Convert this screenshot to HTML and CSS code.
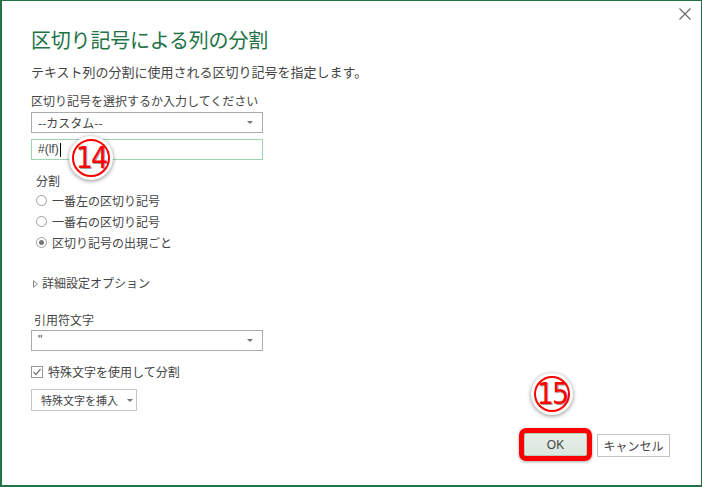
FILE: index.html
```html
<!DOCTYPE html>
<html lang="ja">
<head>
  <meta charset="UTF-8">
  <title>区切り記号による列の分割</title>
  <link rel="stylesheet" href="styles.css">
</head>
<body>

<div class="dialog">
  <svg class="close" width="12" height="12" viewBox="0 0 12 12">
    <path d="M0.5 0.5 L11.5 11.5 M11.5 0.5 L0.5 11.5" stroke="#6a6a6a" stroke-width="1.2" fill="none"/>
  </svg>

  <div class="content">
    <h1 class="title">区切り記号による列の分割</h1>
    <p class="subtitle">テキスト列の分割に使用される区切り記号を指定します。</p>

    <div class="label first">区切り記号を選択するか入力してください</div>
    <div class="select">
      <span>--カスタム--</span>
      <span class="arrow"></span>
    </div>
    <div class="input">
      <span>#(lf)</span><span class="caret"></span>
      <div class="badge b14">14</div>
    </div>

    <div class="group">
      <div class="label">分割</div>
      <div class="radio"><span class="dot"></span>一番左の区切り記号</div>
      <div class="radio"><span class="dot"></span>一番右の区切り記号</div>
      <div class="radio"><span class="dot on"></span>区切り記号の出現ごと</div>
    </div>

    <div class="advanced"><span class="tri"></span>詳細設定オプション</div>

    <div class="label quote">引用符文字</div>
    <div class="select near">
      <span class="latin">"</span>
      <span class="arrow"></span>
    </div>

    <div class="check">
      <svg class="box" width="12" height="12" viewBox="0 0 12 12">
        <rect x="0.5" y="0.5" width="11" height="11" fill="#fff" stroke="#9a9a9a"/>
        <path d="M2.5 6 L5 8.5 L9.5 3" stroke="#777" stroke-width="1.2" fill="none"/>
      </svg>
      特殊文字を使用して分割
    </div>
    <div class="btn insert">特殊文字を挿入<span class="arrow"></span></div>

    <div class="footer">
      <div class="btn ok">OK
        <div class="badge b15">15</div>
      </div>
      <div class="btn cancel">キャンセル</div>
    </div>
  </div>
</div>

</body>
</html>
```

FILE: styles.css
```css
html, body {
  margin: 0;
  padding: 0;
  background: #fff;
}
body {
  font-family: "Noto Sans CJK JP", "Noto Sans", sans-serif;
  color: #444;
  font-size: 12px;
}
.dialog {
  position: relative;
  width: 702px;
  height: 487px;
  box-sizing: border-box;
  border: 1px solid #217346;
  border-left-width: 2px;
  border-bottom-width: 2px;
  background: #fff;
}
.close {
  position: absolute;
  top: 7px;
  right: 10px;
}
.content {
  padding: 27px 31px 0 29px;
}
.title {
  margin: 0;
  font-size: 20px;
  font-weight: normal;
  line-height: 24px;
  color: #217346;
  letter-spacing: -0.2px;
}
.subtitle {
  margin: 11px 0 0;
  font-size: 13px;
  line-height: 18px;
  color: #444;
}
.label {
  line-height: 16px;
}
.label.first {
  margin-top: 12px;
}
.select, .input {
  position: relative;
  width: 232px;
  height: 21px;
  box-sizing: border-box;
  border: 1px solid #ababab;
  padding: 0 6px;
  display: flex;
  align-items: center;
  line-height: 19px;
}
.select {
  margin-top: 3px;
  justify-content: space-between;
}
.select.near {
  margin-top: 2px;
}
.arrow {
  width: 0;
  height: 0;
  border-left: 3px solid transparent;
  border-right: 3px solid transparent;
  border-top: 3px solid #777;
  margin-right: 3px;
}
.latin, .input span {
  font-family: "Liberation Sans", Arial, sans-serif;
}
.input {
  margin-top: 6px;
  border-color: #9fd4b2;
  font-size: 12px;
}
.caret {
  width: 1px;
  height: 14px;
  background: #000;
  margin-left: 1px;
}
.group {
  margin-top: 13px;
  padding-left: 5px;
}
.radio {
  display: flex;
  align-items: center;
  height: 21px;
}
.group .label {
  margin-bottom: 1px;
}
.dot {
  width: 9px;
  height: 9px;
  border: 1px solid #a0a0a0;
  border-radius: 50%;
  margin-right: 5px;
  box-sizing: content-box;
  position: relative;
  background: #fff;
}
.dot.on::after {
  content: "";
  position: absolute;
  left: 2px;
  top: 2px;
  width: 5px;
  height: 5px;
  border-radius: 50%;
  background: #777;
}
.advanced {
  margin-top: 22px;
  line-height: 16px;
  display: flex;
  align-items: center;
}
.tri {
  width: 0;
  height: 0;
  border-top: 4px solid transparent;
  border-bottom: 4px solid transparent;
  border-left: 5px solid #888;
  margin: 2px 4px 0 2px;
  position: relative;
}
.tri::after {
  content: "";
  position: absolute;
  left: -4px;
  top: -2.5px;
  border-top: 2.5px solid transparent;
  border-bottom: 2.5px solid transparent;
  border-left: 3px solid #fff;
}
.label.quote {
  margin-top: 21px;
  margin-left: 3px;
}
.check {
  margin-top: 13px;
  display: flex;
  align-items: center;
  line-height: 16px;
}
.box {
  margin-right: 5px;
}
.btn {
  box-sizing: border-box;
  height: 22px;
  border: 1px solid #c6c6c6;
  display: flex;
  align-items: center;
  justify-content: center;
  background: #fff;
  font-size: 11.5px;
  white-space: nowrap;
}
.insert {
  margin-top: 9px;
  width: 106px;
  justify-content: flex-start;
  padding-left: 9px;
  font-size: 11px;
}
.insert .arrow {
  margin-left: 9px;
}
.footer {
  margin-top: 22px;
  display: flex;
  justify-content: flex-end;
  gap: 10px;
}
.ok {
  position: relative;
  width: 63px;
  height: 23px;
  background: linear-gradient(#e6efe9, #dbe7df);
  border-color: #b9cdbf;
  font-family: "Liberation Sans", Arial, sans-serif;
  font-size: 12px;
}
.ok::after {
  content: "";
  position: absolute;
  left: -6px;
  right: -6px;
  top: -6px;
  bottom: -6px;
  border: 5px solid #ff0000;
  border-radius: 7px;
  box-shadow: 0 1px 3px rgba(0,0,0,0.35);
}
.cancel {
  margin-top: 1px;
  width: 73px;
  height: 23px;
  border-color: #c3c3c3;
  font-size: 12px;
}
.badge {
  position: absolute;
  width: 44px;
  height: 44px;
  box-sizing: border-box;
  padding-bottom: 1px;
  border-radius: 50%;
  background: #fff;
  box-shadow: 0 1px 4px rgba(0,0,0,0.45);
  display: flex;
  align-items: center;
  justify-content: center;
  font-family: "Liberation Sans Narrow", "DejaVu Sans Condensed", sans-serif;
  font-size: 30px;
  font-weight: normal;
  letter-spacing: -2px;
  color: #f00;
  text-shadow: 1px 1px 0 #a0a0a0;
  z-index: 2;
}
.badge::before {
  content: "";
  position: absolute;
  inset: 3px;
  border: 2px solid #f00;
  border-radius: 50%;
}
.b14 {
  left: 37px;
  top: -4px;
}
.b15 {
  left: 6px;
  top: -61px;
  width: 42px;
  height: 42px;
}
```
